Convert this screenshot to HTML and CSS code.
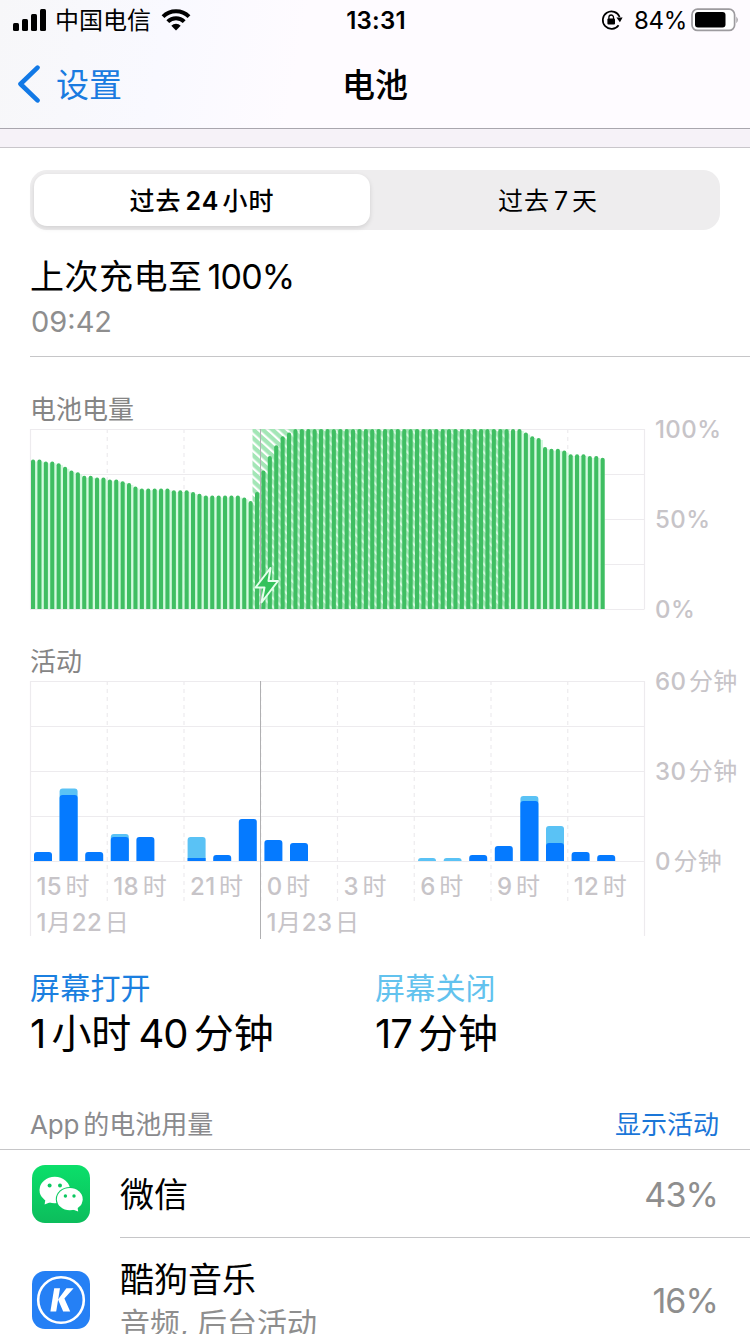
FILE: index.html
```html
<!DOCTYPE html>
<html lang="zh-CN">
  <head>
    <meta charset="UTF-8" />
    <meta name="viewport" content="width=device-width, initial-scale=1.0" />
    <title>电池</title>
    <link rel="stylesheet" href="styles.css">
  </head>
  <body>
    <header class="top">
      <div class="status-bar">
        <div class="status-left">
          <svg class="signal" width="34" height="22" viewBox="0 0 34 22">
            <rect x="0" y="14" width="6" height="8" rx="1.5" />
            <rect x="9" y="10" width="6" height="12" rx="1.5" />
            <rect x="18" y="5" width="6" height="17" rx="1.5" />
            <rect x="27" y="0" width="6" height="22" rx="1.5" />
          </svg>
          <span class="carrier">中国电信</span>
          <svg class="wifi" width="30" height="22" viewBox="0 0 30 22">
            <path d="M2 7.6 A18.5 18.5 0 0 1 28 7.6" />
            <path d="M6.8 12.6 A11.6 11.6 0 0 1 23.2 12.6" />
            <path class="dot" d="M15 21.4 L10.3 16.7 A6.6 6.6 0 0 1 19.7 16.7 Z" />
          </svg>
        </div>
        <div class="clock">13:31</div>
        <div class="status-right">
          <svg class="lock" width="22" height="22" viewBox="0 0 22 22">
            <path d="M17.6 16.2 A8.7 8.7 0 1 1 18.6 8" fill="none" stroke="#000" stroke-width="1.7" />
            <path d="M15.4 8.6 H21.6 L18.9 13.2 Z" />
            <rect x="6.4" y="9.4" width="7.6" height="6" rx="1" />
            <path d="M7.9 10 V8.3 A2.3 2.3 0 0 1 12.5 8.3 V10" fill="none" stroke="#000" stroke-width="1.3" />
          </svg>
          <span class="percent">84%</span>
          <svg class="battery" width="48" height="24" viewBox="0 0 48 24">
            <rect x="1" y="1.2" width="42.6" height="21.2" rx="5.5" fill="#fff" stroke="#9d9b9f" stroke-width="1.7" />
            <rect x="4" y="4" width="30.5" height="15.4" rx="3" />
            <path d="M45.4 8.5 Q48.2 11.8 45.4 15.2 Z" fill="#9d9b9f" />
          </svg>
        </div>
      </div>
      <nav class="nav-bar">
        <a class="back">
          <svg width="24" height="38" viewBox="0 0 24 38">
            <path d="M20.5 2.6 L3.5 19 L20.5 35.4" />
          </svg>
          <span>设置</span>
        </a>
        <h1>电池</h1>
      </nav>
    </header>

    <main class="content">
      <div class="segmented">
        <button class="segment active">过去<span class="num">24</span>小时</button>
        <button class="segment">过去<span class="num">7</span>天</button>
      </div>

      <section class="last-charge">
        <h2>上次充电至<span class="num">100%</span></h2>
        <p>09:42</p>
      </section>

      <section class="chart">
        <h3>电池电量</h3>
        <svg id="levelChart" width="720" height="222" viewBox="0 0 720 222"></svg>
      </section>

      <section class="chart">
        <h3>活动</h3>
        <svg id="activityChart" width="720" height="292" viewBox="0 0 720 292"></svg>
      </section>

      <section class="totals">
        <div>
          <h4 class="screen-on">屏幕打开</h4>
          <p><span class="num first">1</span>小时<span class="num">40</span>分钟</p>
        </div>
        <div>
          <h4 class="screen-off">屏幕关闭</h4>
          <p><span class="num first">17</span>分钟</p>
        </div>
      </section>

      <div class="list-header">
        <span class="list-title"><span class="latin">App</span>的电池用量</span>
        <a>显示活动</a>
      </div>

      <ul class="app-list">
        <li class="app wechat">
          <svg class="app-icon" width="58" height="58" viewBox="0 0 58 58">
            <defs>
              <linearGradient id="wechatBg" x1="0" y1="0" x2="0" y2="1">
                <stop offset="0" stop-color="#0bdf6a" />
                <stop offset="1" stop-color="#0cbd5c" />
              </linearGradient>
            </defs>
            <rect width="58" height="58" rx="13" fill="url(#wechatBg)" />
            <ellipse cx="22.8" cy="25" rx="15.3" ry="13.2" fill="#fff" />
            <path d="M13.5 34 L12.6 39.6 L20 36.5 Z" fill="#fff" />
            <ellipse cx="37.8" cy="34.2" rx="14" ry="12.2" fill="#0bcb61" />
            <ellipse cx="37.8" cy="34.2" rx="12.9" ry="11.1" fill="#fff" />
            <path d="M40 44.2 L46.2 46.6 L45.4 41.4 Z" fill="#fff" />
            <g fill="#0bc860">
              <circle cx="17.6" cy="20.6" r="2" />
              <circle cx="28" cy="20.6" r="2" />
              <circle cx="33.4" cy="31" r="1.7" />
              <circle cx="42" cy="31" r="1.7" />
            </g>
          </svg>
          <div class="app-body">
            <div class="app-name">微信</div>
            <div class="app-usage">43%</div>
          </div>
        </li>
        <li class="app kugou">
          <svg class="app-icon" width="58" height="58" viewBox="0 0 58 58">
            <rect width="58" height="58" rx="13" fill="#2580f5" />
            <circle cx="29" cy="29" r="22.8" fill="none" stroke="#fff" stroke-width="2.6" />
            <g fill="#fff">
              <path d="M22.2 17.2 H28 L24.2 40.6 H18.4 Z" />
              <path d="M34.4 17.2 H41.6 L32.4 27.6 L38.2 40.6 H31.2 L26 28.4 Z" />
            </g>
          </svg>
          <div class="app-body">
            <div class="app-name">
              酷狗音乐
              <small>音频, 后台活动</small>
            </div>
            <div class="app-usage">16%</div>
          </div>
        </li>
      </ul>
    </main>

    <script src="charts.js"></script>
  </body>
</html>
```

FILE: styles.css
```css
* {
  box-sizing: border-box;
}

body {
  margin: 0;
  height: 1334px;
  overflow: hidden;
  background: #fff;
  color: #000;
  font-family: Inter, "Noto Sans CJK SC", sans-serif;
}

h1,
h2,
h3,
h4,
p,
ul {
  margin: 0;
  padding: 0;
  font-weight: 400;
}

.num {
  margin: 0 3px 0 4px;
}

/* status bar + navigation */
.top {
  height: 129px;
  background: linear-gradient(100deg, #f7f7f9 0, #f9f9ff 22%, #fefbff 40%);
  border-bottom: 1px solid #a9a6ae;
}

.status-bar {
  display: grid;
  grid-template-columns: 1fr auto 1fr;
  align-items: center;
  height: 40px;
  padding: 0 11px 0 13px;
  font-size: 24px;
  line-height: 40px;
}

.status-left,
.status-right {
  display: flex;
  align-items: center;
}

.status-right {
  justify-content: flex-end;
}

.carrier,
.percent,
.clock {
  padding-top: 2px;
  line-height: 38px;
}

.carrier {
  margin: 0 10px 0 8px;
}

.wifi path {
  fill: none;
  stroke: #000;
  stroke-width: 4;
}

.wifi .dot {
  fill: #000;
  stroke: none;
}

.clock {
  font-weight: 600;
  letter-spacing: 0.2px;
}

.percent {
  margin: 0 4px 0 11px;
  letter-spacing: -0.3px;
}

.nav-bar {
  display: grid;
  grid-template-columns: 1fr auto 1fr;
  align-items: center;
  height: 88px;
  padding: 0 17px;
  line-height: 90px;
}

.back {
  display: flex;
  align-items: center;
  gap: 15px;
  color: #1a7be0;
  font-size: 33px;
}

.back svg {
  margin-top: -2px;
}

.back path {
  fill: none;
  stroke: #1279e6;
  stroke-width: 4.6;
  stroke-linecap: round;
  stroke-linejoin: round;
}

.nav-bar h1 {
  font-size: 33px;
  font-weight: 500;
}

/* page body */
.content {
  border-top: 18px solid #f6f2f8;
}

.content::before {
  content: "";
  display: block;
  height: 1px;
  background: #c9c6cb;
}

.segmented {
  display: flex;
  width: 690px;
  height: 60px;
  margin: 22px 0 0 30px;
  padding: 4px;
  border-radius: 17px;
  background: #eeedee;
}

.segment {
  flex: 1;
  border: 0;
  padding: 0 0 3px 10px;
  border-radius: 13px;
  background: none;
  color: #000;
  font-family: inherit;
  font-size: 25px;
  letter-spacing: 1px;
}

.segment.active {
  flex: 0 0 336px;
  padding-left: 0;
  background: #fff;
  font-weight: 500;
  box-shadow: 0 2px 5px rgba(0, 0, 0, 0.12);
}

.segment.active .num {
  font-weight: 600;
}

.last-charge {
  height: 127px;
  margin-left: 30px;
  padding-top: 22px;
  border-bottom: 1px solid #c6c6c8;
}

.last-charge h2 {
  font-size: 34px;
  line-height: 50px;
  letter-spacing: 0.5px;
}

.last-charge .num {
  margin-left: 5px;
  letter-spacing: -0.8px;
}

.last-charge p {
  padding-left: 1px;
  color: #8e8e8e;
  font-size: 29px;
  line-height: 40px;
}

.chart {
  margin-left: 30px;
}

.chart h3 {
  height: 30px;
  color: #858585;
  font-size: 26px;
  line-height: 32px;
}

.last-charge + .chart {
  margin-top: 37px;
}

.chart svg {
  display: block;
  overflow: visible;
}

.grid {
  stroke: #edebee;
  stroke-width: 1.2;
}

.grid.dashed {
  stroke-dasharray: 4 4;
}

.midnight {
  stroke: #b0b0b2;
  stroke-width: 1;
}

.axis {
  fill: #c7c4c8;
  font-size: 24px;
  font-weight: 500;
  letter-spacing: 0.4px;
}

.axis .unit {
  font-weight: 400;
}

.gap {
  fill: #d3fadf;
}

.level {
  fill: #3fbe62;
}

.on {
  fill: #057aff;
}

.off {
  fill: #5ac2f5;
}

.totals {
  display: grid;
  grid-template-columns: 345px 1fr;
  height: 136px;
  margin-left: 30px;
}

.totals h4 {
  font-size: 30px;
  line-height: 40px;
  letter-spacing: 0.2px;
}

.totals p {
  font-size: 40px;
  line-height: 51px;
}

.totals .num {
  margin: 0 6px 0 7px;
  letter-spacing: -0.9px;
}

.totals .first {
  margin: 0 6px 0 0;
}

.screen-on {
  color: #1b7fe0;
}

.screen-off {
  color: #62c2ee;
}

.list-header {
  display: flex;
  justify-content: space-between;
  height: 46px;
  padding: 0 31px 0 30px;
  border-bottom: 1px solid #c6c6c8;
  color: #8a8a8d;
  font-size: 26px;
  line-height: 42px;
}

.list-header a {
  color: #1a76d8;
}

.latin {
  margin-right: 4px;
  letter-spacing: -0.2px;
}

.app-list {
  list-style: none;
}

.app {
  display: flex;
  padding-left: 32px;
}

.app-icon {
  flex: none;
  margin: 15px 30px 0 0;
}

.kugou .app-icon {
  margin-top: 33px;
}

.app-body {
  display: flex;
  flex: 1;
  align-items: center;
  justify-content: space-between;
  height: 88px;
  padding: 2px 32px 0 0;
  border-bottom: 1px solid #c6c6c8;
}

.kugou .app-body {
  height: 124px;
}

.app-name {
  font-size: 34px;
  line-height: 46px;
}

.kugou .app-name {
  line-height: 44px;
}

.app-name small {
  display: block;
  color: #8e8e8e;
  font-size: 30px;
  line-height: 42px;
}

.app-usage {
  color: #8e8e8e;
  font-size: 34px;
  letter-spacing: -0.9px;
}
```

FILE: charts.js
```js
const SVG_NS = "http://www.w3.org/2000/svg";
const WIDTH = 614.5;
const HEIGHT = 180;
const TOP = 5;
const BASE = TOP + HEIGHT;

function draw(parent, tag, attrs, text) {
  const el = document.createElementNS(SVG_NS, tag);
  for (const name in attrs) {
    el.setAttribute(name, attrs[name]);
  }
  if (text) el.textContent = text;
  parent.appendChild(el);
  return el;
}

function line(svg, x1, y1, x2, y2, cls) {
  draw(svg, "line", { x1, y1, x2, y2, class: cls });
}

function drawGrid(svg, bottom, dashBottom) {
  for (let i = 0; i <= 4; i++) {
    const y = TOP + 0.5 + i * 45;
    line(svg, 0, y, WIDTH, y, "grid");
  }
  for (let i = 0; i <= 8; i++) {
    const x = 0.5 + i * 76.75;
    const edge = i === 0 || i === 8;
    line(svg, x, TOP, x, edge ? bottom : dashBottom, edge ? "grid" : "grid dashed");
  }
}

function topRounded(x, y, w, h, r) {
  r = Math.min(r, h);
  return `M${x} ${y + h} V${y + r} Q${x} ${y} ${x + r} ${y} H${x + w - r} Q${x + w} ${y} ${x + w} ${y + r} V${y + h} Z`;
}

// battery level, one bar every 15 minutes
const levels = [
  83, 83, 82, 82, 81, 79, 77, 76, 74, 74, 73, 73, 72, 72, 71, 70, 68, 67, 67,
  67, 67, 67, 66, 66, 66, 65, 64, 63, 63, 63, 63, 63, 63, 62, 60, 65, 77, 85,
  91, 96, 98, ...Array(36).fill(100), 98, 96, 95, 90, 89, 89, 88, 86, 86, 86,
  85, 85, 84
];

function drawLevels() {
  const svg = document.getElementById("levelChart");
  drawGrid(svg, BASE, BASE);

  levels.forEach((level, i) => {
    const h = level * 1.8;
    draw(svg, "rect", { x: 1 + i * 6.4, y: BASE - h + 2, width: i === 89 ? 4 : 6.4, height: h - 2, class: "gap" });
  });

  const defs = draw(svg, "defs", {});
  const pattern = draw(defs, "pattern", {
    id: "hatch", width: 6.4, height: 6.4, patternUnits: "userSpaceOnUse", patternTransform: "rotate(42)"
  });
  draw(pattern, "rect", { width: 6.4, height: 4.2, fill: "#a3e6b6" });
  draw(svg, "rect", { x: 222.5, y: TOP, width: 257, height: HEIGHT, fill: "url(#hatch)" });
  line(svg, 230.5, TOP, 230.5, BASE, "midnight");

  levels.forEach((level, i) => {
    const h = level * 1.8;
    draw(svg, "path", { d: topRounded(1 + i * 6.4, BASE - h, 4.1, h, 2), class: "level" });
  });

  // charging bolt
  draw(svg, "path", {
    d: "M240.5 144 L225.5 163.5 H234.5 L231.5 178.5 L248 157 H238.5 Z",
    fill: "#34c25b", stroke: "#e6ffed", "stroke-width": 2, "stroke-linejoin": "round"
  });

  ["100%", "50%", "0%"].forEach((label, i) => {
    draw(svg, "text", { x: 625, y: TOP + 9 + i * 90, class: "axis" }, label);
  });
}

// minutes per hour: [hour, screen on, screen off]
const activity = [
  [0, 3, 0], [1, 22, 2.2], [2, 3, 0], [3, 8, 1], [4, 8, 0], [6, 1, 7],
  [7, 2, 0], [8, 14, 0], [9, 7, 0], [10, 6, 0], [15, 0, 1], [16, 0, 1],
  [17, 2, 0], [18, 5, 0], [19, 20, 1.7], [20, 6, 5.7], [21, 3, 0], [22, 2, 0]
];

function drawActivity() {
  const svg = document.getElementById("activityChart");
  drawGrid(svg, 260, 226);
  line(svg, 230.5, TOP, 230.5, 263, "midnight");

  activity.forEach(([hour, on, off]) => {
    const x = 4 + hour * 25.6;
    const total = (on + off) * 3;
    if (off) draw(svg, "path", { d: topRounded(x, BASE - total, 18, total, 3), class: "off" });
    if (on) draw(svg, "path", { d: topRounded(x, BASE - on * 3, 18, on * 3, on > 1 ? 3 : 0), class: "on" });
  });

  ["60", "30", "0"].forEach((label, i) => {
    const text = draw(svg, "text", { x: 625, y: TOP + 9 + i * 90, class: "axis" }, label);
    draw(text, "tspan", { dx: 2.5, class: "unit" }, "分钟");
  });

  ["15", "18", "21", "0", "3", "6", "9", "12"].forEach((label, i) => {
    const text = draw(svg, "text", { x: 6.5 + i * 76.75, y: 218.5, class: "axis" }, label);
    draw(text, "tspan", { dx: 3.5, class: "unit" }, "时");
  });

  ["22", "23"].forEach((day, i) => {
    const text = draw(svg, "text", { x: 6.5 + i * 230, y: 255, class: "axis" }, "1");
    draw(text, "tspan", { class: "unit" }, "月");
    draw(text, "tspan", { dx: 0.5 }, day);
    draw(text, "tspan", { dx: 2.5, class: "unit" }, "日");
  });
}

drawLevels();
drawActivity();
```
